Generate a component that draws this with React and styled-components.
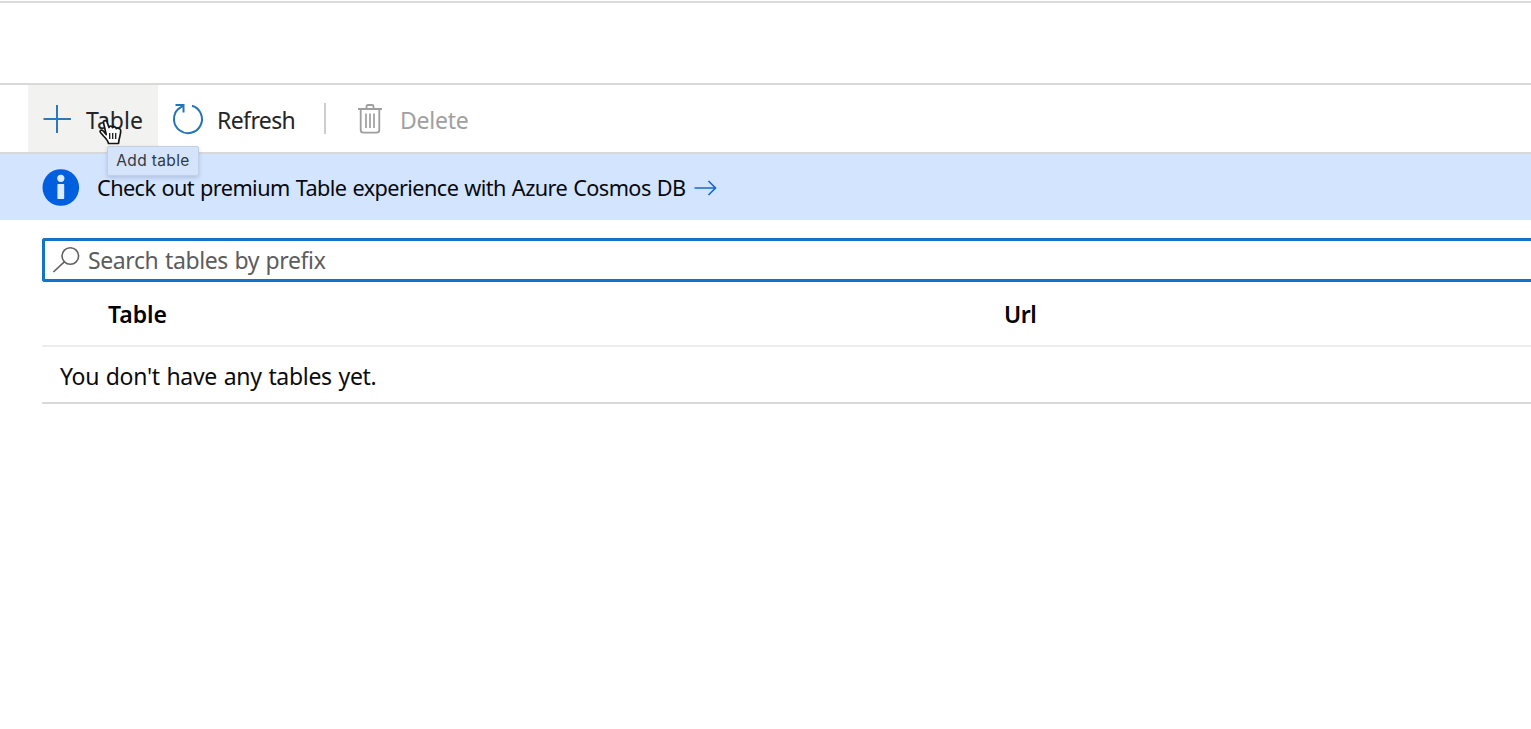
import React from 'react';
import styled, { createGlobalStyle } from 'styled-components';

const GlobalStyle = createGlobalStyle`
  * { box-sizing: border-box; }
  html, body { margin: 0; background: #fff; overflow: hidden; }
  body { font-family: "Noto Sans", "Open Sans", sans-serif; color: #0b0b0b; }
  svg { display: block; flex: none; overflow: visible; }
`;

const Page = styled.div`
  height: 729px;
  padding-top: 1px;
  overflow: hidden;
`;

const Header = styled.header`
  height: 84px;
  border-top: 2px solid #dadada;
  border-bottom: 2px solid #d9d9d9;
`;

const Toolbar = styled.nav`
  display: flex;
  height: 69px;
  padding-left: 28px;
  border-bottom: 2px solid #d6d8db;
`;

const Label = styled.span`
  font-size: ${(p) => p.$size || 23}px;
  font-weight: ${(p) => p.$weight || 400};
  letter-spacing: ${(p) => p.$spacing || 0}px;
  word-spacing: ${(p) => p.$words || 0}px;
  line-height: 32px;
  white-space: nowrap;
`;

const ToolButton = styled.button`
  position: relative;
  display: flex;
  align-items: flex-start;
  height: 67px;
  width: ${(p) => p.$width}px;
  padding: 0 0 0 ${(p) => p.$pad}px;
  gap: ${(p) => p.$gap}px;
  border: 0;
  font-family: inherit;
  color: ${(p) => (p.disabled ? '#a0a0a0' : '#252525')};
  background: ${(p) => (p.$hovered ? '#f2f2f0' : 'transparent')};
  ${Label} { margin-top: 19px; }
`;

const ToolIcon = styled.svg`
  margin-top: 18px;
  fill: none;
`;

const Divider = styled.div`
  width: 2px;
  height: 31px;
  margin-top: 18px;
  background: #cecece;
`;

const Tooltip = styled.span`
  position: absolute;
  z-index: 2;
  left: 79px;
  top: 61px;
  width: 92px;
  height: 30px;
  border: 1px solid #c2d0e4;
  border-radius: 2px;
  background: #d5e4fb;
  box-shadow: 0 2px 4px rgba(40, 60, 100, 0.2);
  color: #303944;
  font-family: Inter, sans-serif;
  font-size: 15.5px;
  letter-spacing: 0.35px;
  line-height: 27px;
  text-align: center;
  white-space: nowrap;
`;

const Pointer = styled.svg`
  position: absolute;
  z-index: 3;
  left: 71px;
  top: 34px;
`;

const Banner = styled.aside`
  display: flex;
  align-items: center;
  height: 66px;
  padding-left: 42px;
  background: #d3e4ff;
  color: #06090f;
  ${Label} { margin: 1px 9px 0 18px; }
`;

const Content = styled.main`
  padding: 18px 0 0 42px;
`;

const SearchField = styled.label`
  display: flex;
  align-items: center;
  height: 44px;
  padding-left: 8px;
  gap: 8px;
  border: 3px solid #1373c8;
  border-right: 0;
  border-radius: 3px 0 0 3px;
  color: #5c5c5c;
`;

const HeadRow = styled.div`
  display: grid;
  grid-template-columns: 896px 1fr;
  height: 65px;
  padding: 16px 0 0 66px;
  border-bottom: 2px solid #ededed;
  color: #000;
`;

const EmptyRow = styled.div`
  height: 57px;
  padding: 13px 0 0 18px;
  border-bottom: 2px solid #d9d9d9;
`;

const PlusIcon = () => (
  <ToolIcon width="28" height="30" stroke="#2f78b8" strokeWidth="2">
    <path d="M0.5 16H28M14 2V30" />
  </ToolIcon>
);

const RefreshIcon = () => (
  <ToolIcon width="30" height="32" stroke="#2474b8" strokeWidth="2">
    <path d="M19 2.700A14 14 0 1 1 5.500 5.800L10.500 2.500M2.500 2H10.500V9.500" />
  </ToolIcon>
);

const TrashIcon = () => (
  <ToolIcon width="24" height="32" stroke="#9e9e9e" strokeWidth="1.8">
    <path d="M0 6H24M8.5 6V3.5Q8.5 2 10 2H14Q15.500 2 15.500 3.500V6M2.700 6V27Q2.700 29.700 5.500 29.700H18.500Q21.300 29.700 21.300 27V6" />
    <path d="M8 10.500V25M12 10.500V25M16 10.500V25" strokeWidth="1.700" />
  </ToolIcon>
);

const InfoIcon = () => (
  <svg width="37" height="37">
    <circle cx="18.800" cy="18.500" r="18.300" fill="#005fdf" />
    <circle cx="18.800" cy="9.300" r="3.600" fill="#dceaff" />
    <rect x="15.400" y="15" width="6.800" height="15" rx="0.700" fill="#dceaff" />
  </svg>
);

const ArrowIcon = () => (
  <svg width="23" height="16" fill="none" stroke="#1b67cf" strokeWidth="1.700">
    <path d="M0.500 9H22M14.500 2L21.500 9L14.500 16" />
  </svg>
);

const SearchIcon = () => (
  <svg width="27" height="27" fill="none" stroke="#606060" strokeWidth="1.600">
    <circle cx="17.300" cy="9" r="8.300" />
    <path d="M11.300 14.800L0.400 25" />
  </svg>
);

const HandPointer = () => (
  <Pointer width="24" height="27" viewBox="0 0 24 27">
    <path
      d="M7.200 15.500L4.500 3.800C4 1.300 7.300 0.700 8 3L10 8.500C10.500 6.500 13.100 6.700 13.600 8.700C14.300 7.200 16.800 7.600 17.200 9.600C18.600 8.500 21.600 9.500 21.700 11.500C22 15.500 20 18.500 19.500 24.500H9.500C8.800 21.500 6.500 19 4.500 17L1.500 13.500C0.200 11.500 2.500 10 4.300 12Z"
      fill="#fff" stroke="#171717" strokeWidth="1.700" strokeLinejoin="round"
    />
    <path d="M10.700 14V20M13.700 14V20M16.700 14V20" stroke="#171717" strokeWidth="1.300" />
  </Pointer>
);

export default function App() {
  return (
    <Page>
      <GlobalStyle />
      <Header />
      <Toolbar>
        <ToolButton $hovered $width={130} $pad={15} $gap={15}>
          <PlusIcon />
          <Label>Table</Label>
          <Tooltip role="tooltip">Add table</Tooltip>
          <HandPointer />
        </ToolButton>
        <ToolButton $width={166} $pad={15} $gap={14}>
          <RefreshIcon />
          <Label $spacing={-0.6}>Refresh</Label>
        </ToolButton>
        <Divider />
        <ToolButton disabled $width={150} $pad={32} $gap={18}>
          <TrashIcon />
          <Label $spacing={-0.25}>Delete</Label>
        </ToolButton>
      </Toolbar>
      <Banner>
        <InfoIcon />
        <Label $size={21.7} $spacing={-0.58} $words={0.95}>Check out premium Table experience with Azure Cosmos DB</Label>
        <ArrowIcon />
      </Banner>
      <Content>
        <SearchField>
          <SearchIcon />
          <Label $spacing={-0.4} $words={1}>Search tables by prefix</Label>
        </SearchField>
        <HeadRow>
          <Label $weight={600}>Table</Label>
          <Label $weight={600} $spacing={-0.5}>Url</Label>
        </HeadRow>
        <EmptyRow>
          <Label $spacing={-0.32} $words={1.1}>You don't have any tables yet.</Label>
        </EmptyRow>
      </Content>
    </Page>
  );
}
